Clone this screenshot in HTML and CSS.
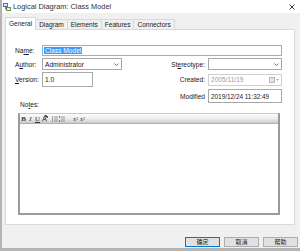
FILE: index.html
```html
<!DOCTYPE html>
<html lang="en">

<head>
  <meta charset="UTF-8">
  <title>Logical Diagram: Class Model</title>
  <link rel="stylesheet" href="styles.css">
</head>

<body>
  <div class="window">
    <!-- title bar -->
    <div class="titlebar">
      <svg class="app-icon" width="8" height="8" viewBox="0 0 8 8">
        <rect x="0.5" y="0.5" width="4" height="3" fill="#dfe9f5" stroke="#4a79b8" stroke-width="1" />
        <rect x="3.5" y="4.5" width="4" height="3" fill="#e6f0d8" stroke="#6b9a3a" stroke-width="1" />
        <path d="M2.5 3.5 V6 H3.5" fill="none" stroke="#555" stroke-width="0.8" />
      </svg>
      <span class="title">Logical Diagram: Class Model</span>
      <svg class="close" width="6" height="6" viewBox="0 0 6 6">
        <path d="M0.5 0.5 L5.5 5.5 M5.5 0.5 L0.5 5.5" stroke="#222" stroke-width="0.9" />
      </svg>
    </div>

    <!-- tabs -->
    <div class="tabs">
      <div class="tab active">General</div>
      <div class="tab">Diagram</div>
      <div class="tab">Elements</div>
      <div class="tab">Features</div>
      <div class="tab">Connectors</div>
    </div>

    <!-- general page -->
    <div class="panel">
      <div class="form">
        <label class="lbl">Na<u>m</u>e:</label>
        <div class="field name-field"><span class="selected">Class Model</span></div>

        <label class="lbl">A<u>u</u>thor:</label>
        <div class="field select">
          <span>Administrator</span>
          <svg class="chev" width="5" height="3" viewBox="0 0 5 3"><path d="M0.5 0.5 L2.5 2.5 L4.5 0.5" fill="none" stroke="#555" stroke-width="0.8" /></svg>
        </div>
        <label class="rlbl">St<u>e</u>reotype:</label>
        <div class="field select">
          <span></span>
          <svg class="chev" width="5" height="3" viewBox="0 0 5 3"><path d="M0.5 0.5 L2.5 2.5 L4.5 0.5" fill="none" stroke="#555" stroke-width="0.8" /></svg>
        </div>

        <label class="lbl"><u>V</u>ersion:</label>
        <div class="field version">1.0</div>
        <label class="rlbl">Created:</label>
        <div class="field created">
          <span>2005/11/19</span>
          <span class="cal">
            <svg width="6" height="6" viewBox="0 0 6 6"><rect x="0.5" y="0.5" width="5" height="5" fill="#e4e4e4" stroke="#b8b8b8" stroke-width="1" /></svg>
            <svg width="3" height="2" viewBox="0 0 3 2"><path d="M0 0 L3 0 L1.5 2 Z" fill="#b0b0b0" /></svg>
          </span>
        </div>

        <label class="rlbl row4">Modified</label>
        <div class="field modified row4">2019/12/24 11:32:49</div>
      </div>

      <div class="notes-label">No<u>t</u>es:</div>

      <div class="editor">
        <div class="toolbar">
          <span class="tb bold">B</span>
          <span class="tb italic">I</span>
          <span class="tb under">U</span>
          <span class="tb hl">
            <svg width="6" height="7" viewBox="0 0 6 7">
              <path d="M0.5 6.5 L2.5 0.8 L4.5 6.5 M1.3 4.4 H3.7" fill="none" stroke="#444" stroke-width="0.9" />
              <path d="M3.2 0.2 L5.8 2.4" stroke="#222" stroke-width="1.4" />
            </svg>
          </span>
          <span class="tb">
            <svg width="6" height="6" viewBox="0 0 6 6">
              <path d="M0 1 H1 M0 3 H1 M0 5 H1" stroke="#555" stroke-width="1" />
              <path d="M2 1 H6 M2 3 H6 M2 5 H6" stroke="#777" stroke-width="0.7" />
            </svg>
          </span>
          <span class="tb">
            <svg width="6" height="6" viewBox="0 0 6 6">
              <path d="M0.6 0 V2 M0.6 4 V6" stroke="#555" stroke-width="0.8" />
              <path d="M2 1 H6 M2 3 H6 M2 5 H6" stroke="#777" stroke-width="0.7" />
            </svg>
          </span>
          <span class="tb script gap">x<sup>2</sup></span>
          <span class="tb script">x<sub>2</sub></span>
        </div>
        <div class="editor-body"></div>
      </div>
    </div>

    <!-- buttons -->
    <div class="footer">
      <button class="btn default">确定</button>
      <button class="btn">取消</button>
      <button class="btn">帮助</button>
    </div>
  </div>
</body>

</html>
```

FILE: styles.css
```css
/* reset */
html,
body {
  margin: 0;
  padding: 0;
}

* {
  box-sizing: border-box;
}

body {
  width: 300px;
  height: 251px;
  overflow: hidden;
  background-color: #f0f0f0;
  font-family: "Liberation Sans", Arial, sans-serif;
  color: #1a1a1a;
}

u {
  text-decoration: underline;
  text-underline-offset: 1px;
}

/* window */
.window {
  width: 300px;
  height: 251px;
  border-left: 2px solid #b4b4b4;
  border-bottom: 3px solid #b4b4b4;
  background-color: #f0f0f0;
  display: flex;
  flex-direction: column;
}

.titlebar {
  height: 13px;
  background-color: #fff;
  display: flex;
  align-items: center;
  padding-left: 1px;
  padding-right: 5px;
}

.app-icon {
  flex: none;
}

.title {
  margin-left: 2px;
  font-size: 7.4px;
  line-height: 13px;
  color: #333;
  flex: 1;
}

.close {
  flex: none;
}

/* tabs */
.tabs {
  height: 16px;
  display: flex;
  align-items: flex-end;
  padding-left: 3px;
}

.tab {
  height: 10px;
  padding: 0 3px;
  font-size: 6.5px;
  line-height: 9px;
  border: 1px solid #d9d9d9;
  border-left: none;
  border-bottom: none;
  background-color: #f0f0f0;
  color: #222;
}

.tab.active {
  height: 13px;
  margin-bottom: -1px;
  border-left: 1px solid #d9d9d9;
  background-color: #fff;
  line-height: 11px;
  position: relative;
  z-index: 1;
}

/* panel */
.panel {
  margin-left: 3px;
  width: 290px;
  height: 196px;
  background-color: #fff;
  border: 1px solid #d9d9d9;
  padding: 15px 0 0 9px;
}

.form {
  display: grid;
  grid-template-columns: 27px 80px 86px 74px;
  grid-template-rows: 11px 12px 15px 14px;
  row-gap: 2px;
  font-size: 6.6px;
}

.lbl {
  grid-column: 1;
  align-self: center;
}

.rlbl {
  grid-column: 3;
  text-align: right;
  padding-right: 3px;
  align-self: center;
}

.row4 {
  grid-row: 4;
}

.field {
  border: 1px solid #a9a9a9;
  background-color: #fff;
  display: flex;
  align-items: center;
  padding-left: 2px;
  font-size: 6.6px;
  white-space: nowrap;
}

.name-field {
  grid-column: 2 / 5;
  border-color: #7fb6ea;
  padding-left: 1px;
}

.selected {
  background-color: #3399ff;
  color: #fff;
  line-height: 7px;
  padding: 0 1px;
}

.select {
  justify-content: space-between;
  padding-right: 2px;
}

.version {
  grid-column: 2;
  width: 51px;
}

.created {
  justify-content: space-between;
  align-self: center;
  height: 12px;
  color: #9e9e9e;
  border-color: #cfcfcf;
  padding-right: 2px;
}

.cal {
  display: flex;
  align-items: center;
  gap: 1px;
}

.modified {
  grid-column: 4;
  font-size: 6.4px;
}

/* notes */
.notes-label {
  margin: -2px 0 0 5px;
  font-size: 6.6px;
  line-height: 8px;
}

.editor {
  margin: 4px 0 0 3px;
  width: 262px;
  height: 102px;
  border: 2px solid #9a9a9a;
  border-top-width: 1px;
  border-top-color: #c8c8c8;
  display: flex;
  flex-direction: column;
}

.toolbar {
  height: 10px;
  background: linear-gradient(#fdfdfd, #ececec 55%, #c9c9c9);
  border-bottom: 1px solid #b0b0b0;
  display: flex;
  align-items: center;
}

.tb {
  width: 7px;
  height: 8px;
  display: flex;
  align-items: center;
  justify-content: center;
  font-family: "Liberation Serif", serif;
  font-size: 7px;
  color: #333;
}

.bold {
  font-weight: bold;
}

.italic {
  font-style: italic;
}

.under {
  text-decoration: underline;
}

.hl {
  margin-right: 3px;
}

.script {
  font-size: 6px;
}

.script sup,
.script sub {
  font-size: 4px;
}

.gap {
  margin-left: 7px;
}

.editor-body {
  flex: 1;
  background-color: #fff;
}

/* footer buttons */
.footer {
  flex: 1;
  display: flex;
  justify-content: flex-end;
  align-items: flex-start;
  gap: 4px;
  padding: 12px 2px 0 0;
}

.btn {
  width: 35px;
  height: 10px;
  padding: 0;
  border: 1px solid #adadad;
  background-color: #e1e1e1;
  font-family: "Noto Sans CJK SC", sans-serif;
  font-size: 6px;
  line-height: 8px;
  color: #222;
}

.btn.default {
  border-color: #0078d7;
}
```
